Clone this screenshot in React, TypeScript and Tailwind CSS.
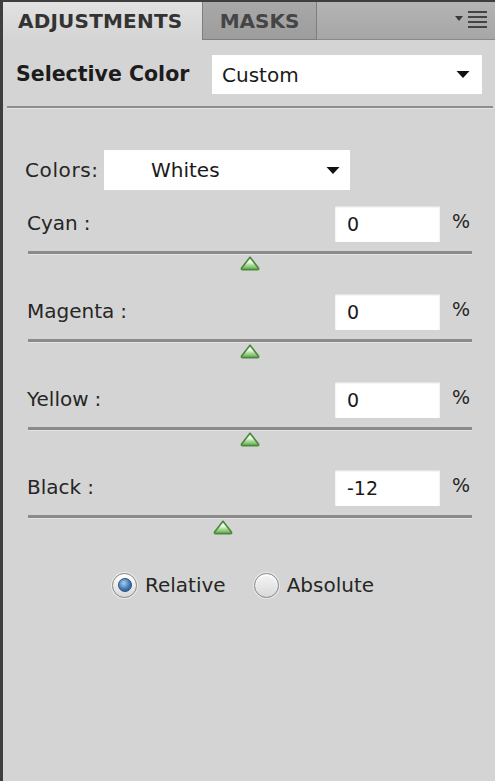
import React from 'react';

const font = { fontFamily: '"DejaVu Sans", Verdana, sans-serif' };

function Thumb() {
    return (
        <svg width="20" height="15" viewBox="0 0 20 15">
            <defs>
                <linearGradient id="tg" x1="0" y1="0" x2="0" y2="1">
                    <stop offset="0" stopColor="#ffffff" />
                    <stop offset="0.4" stopColor="#eef8e8" />
                    <stop offset="0.65" stopColor="#a8d896" />
                    <stop offset="1" stopColor="#63a84f" />
                </linearGradient>
            </defs>
            <path
                d="M10 1.2 L18.4 12 Q19 13.6 17.4 13.6 L2.6 13.6 Q1 13.6 1.6 12 Z"
                fill="url(#tg)"
                stroke="#4a8a3c"
                strokeWidth="1.7"
                strokeLinejoin="round"
            />
        </svg>
    );
}

function Caret() {
    return (
        <svg width="14" height="9" viewBox="0 0 14 9">
            <path d="M0.5 1 L13.5 1 L7 8 Z" fill="#111" />
        </svg>
    );
}

function Slider({ label, value }: { label: string; value: number }) {
    const left = 250 - 28 + (value / 100) * 222;
    return (
        <div className="mt-[16px]">
            <div className="flex items-start">
                <div className="pl-[24px] pt-[2px] text-[20px] text-[#262626] w-[332px]">
                    {label}
                    <span className="ml-[6px]">:</span>
                </div>
                <div className="w-[105px] h-[36px] bg-white shadow-[inset_0_1px_2px_rgba(0,0,0,0.15)] flex items-center pl-[12px] text-[19px] text-[#1a1a1a]">
                    {value}
                </div>
                <div className="ml-[12px] pt-[1px] text-[19px] text-[#262626]">%</div>
            </div>
            <div className="relative ml-[25px] w-[444px] mt-[9px] h-[27px]">
                <div className="h-[3px] bg-[#8b8b8b] border-b border-[#e2e2e2] box-content" />
                <div className="absolute top-[5px]" style={{ left: left - 10 }}>
                    <Thumb />
                </div>
            </div>
        </div>
    );
}

function Radio({ checked, label }: { checked?: boolean; label: string }) {
    return (
        <div className="flex items-center">
            <div className="w-[25px] h-[25px] rounded-full border border-[#8a8a8a] bg-gradient-to-b from-[#ffffff] to-[#d8d8d8] flex items-center justify-center shadow-[0_0_0_1px_#eaeaea]">
                {checked ? (
                    <div className="w-[14px] h-[14px] rounded-full border border-[#2b4f7a] bg-[radial-gradient(circle_at_40%_35%,#a9d0f0,#3f78b5_55%,#1f4c82)]" />
                ) : (
                    <div className="w-[19px] h-[19px] rounded-full bg-gradient-to-b from-[#f2f2f2] to-[#dcdcdc]" />
                )}
            </div>
            <span className="ml-[8px] text-[20px] text-[#262626]">{label}</span>
        </div>
    );
}

export default function App() {
    return (
        <div
            className="w-[495px] h-[781px] bg-[#d4d4d4] border-t-2 border-l-[3px] border-[#3e3e3e] overflow-hidden"
            style={font}
        >
            {/* tab bar */}
            <div className="h-[38px] flex bg-gradient-to-b from-[#b4b4b4] to-[#a6a6a6]">
                <div className="w-[199px] h-[38px] bg-gradient-to-b from-[#e2e2e2] to-[#d4d4d4] flex items-center pl-[15px] text-[20px] font-bold text-[#333] tracking-[0.2px]">
                    ADJUSTMENTS
                </div>
                <div className="w-[115px] h-[38px] border-l border-r border-b border-[#7e7e7e] bg-gradient-to-b from-[#a8a8a8] to-[#9d9d9d] flex items-center justify-center text-[20px] font-bold text-[#454545]">
                    MASKS
                </div>
                <div className="flex-1 border-b border-[#8a8a8a] flex items-center justify-end pr-[6px]">
                    <svg width="34" height="20" viewBox="0 0 34 20">
                        <path d="M0 5 L8 5 L4 10 Z" fill="#3a3a3a" />
                        <rect x="13" y="0" width="19" height="2" fill="#444" />
                        <rect x="13" y="5" width="19" height="2" fill="#444" />
                        <rect x="13" y="10" width="19" height="2" fill="#444" />
                        <rect x="13" y="15" width="19" height="2" fill="#444" />
                    </svg>
                </div>
            </div>

            {/* header */}
            <div className="mt-[15px] flex items-center">
                <div className="pl-[13px] w-[209px] text-[20.5px] font-bold text-[#1c1c1c]">
                    Selective Color
                </div>
                <div className="w-[270px] h-[39px] bg-white flex items-center pl-[10px] pr-[12px] text-[20px] text-[#1a1a1a]">
                    <span className="flex-1">Custom</span>
                    <Caret />
                </div>
            </div>

            <div className="mt-[12px] ml-[4px] mr-[2px] h-[2px] bg-[#8d8d8d] border-b border-[#e4e4e4] box-content" />

            {/* colors */}
            <div className="mt-[41px] flex items-center">
                <div className="pl-[22px] w-[101px] text-[20px] text-[#262626] tracking-[0.6px]">Colors:</div>
                <div className="w-[246px] h-[40px] bg-white flex items-center pl-[47px] pr-[10px] text-[20px] text-[#1a1a1a]">
                    <span className="flex-1">Whites</span>
                    <Caret />
                </div>
            </div>

            <Slider label="Cyan" value={0} />
            <Slider label="Magenta" value={0} />
            <Slider label="Yellow" value={0} />
            <Slider label="Black" value={-12} />

            <div className="mt-[28px] flex pl-[109px] gap-[28px]">
                <Radio checked label="Relative" />
                <Radio label="Absolute" />
            </div>
        </div>
    );
}
